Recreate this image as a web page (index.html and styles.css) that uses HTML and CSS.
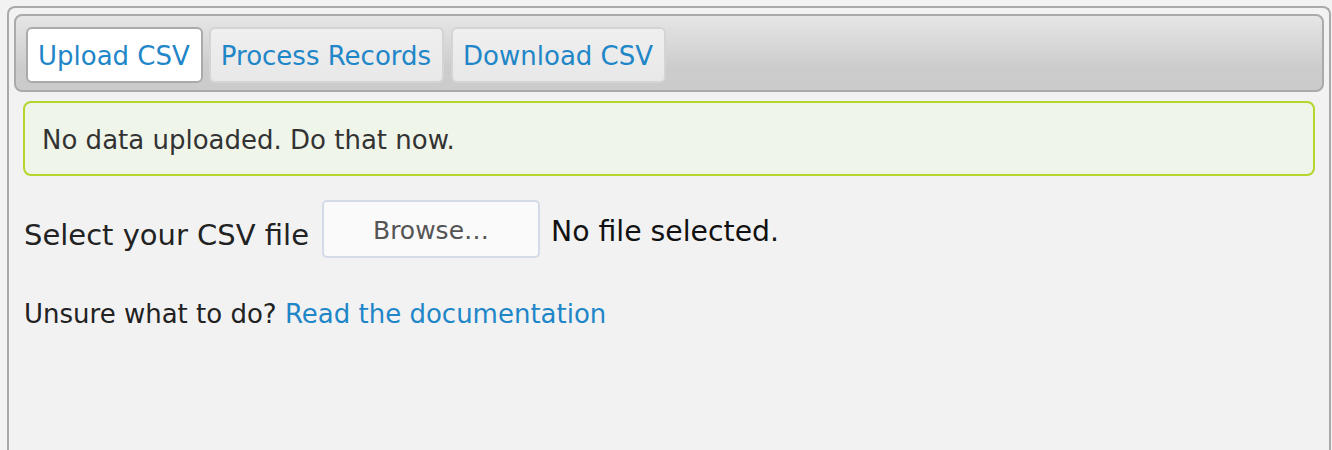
FILE: index.html
```html
<!DOCTYPE html>
<html>
<head>
<meta charset="utf-8">
<link rel="stylesheet" href="styles.css">
</head>
<body>
<div class="tabs">
  <ul class="tab-nav">
    <li class="tab active"><a href="#">Upload CSV</a></li>
    <li class="tab"><a href="#">Process Records</a></li>
    <li class="tab"><a href="#">Download CSV</a></li>
  </ul>
  <div class="panel">
    <div class="notice">No data uploaded. Do that now.</div>
    <div class="file-row">
      <span class="file-label">Select your CSV file</span>
      <span class="browse">Browse…</span>
      <span class="file-status">No file selected.</span>
    </div>
    <p class="help">Unsure what to do? <a href="#">Read the documentation</a></p>
  </div>
</div>
</body>
</html>
```
FILE: styles.css
```css
html, body {
  margin: 0;
  background: #f2f2f2;
}
body {
  padding: 6px 1px 0 7px;
  font-family: "DejaVu Sans", Verdana, sans-serif;
  color: #222;
  overflow: hidden;
}
.tabs {
  border: 2px solid #aaaaaa;
  border-bottom: none;
  border-radius: 8px 8px 0 0;
  padding: 6px 5px 0;
  height: 444px;
  box-sizing: border-box;
}
.tab-nav {
  list-style: none;
  margin: 0;
  display: flex;
  gap: 6px;
  padding: 11px 10px 7px;
  border: 2px solid #aaaaaa;
  border-radius: 8px;
  background: linear-gradient(#e6e6e6, #cccccc 70%, #cbcbcb);
}
.tab {
  height: 52px;
  border: 2px solid #d4d4d4;
  border-radius: 6px;
  background: linear-gradient(#efefef, #e8e8e8);
}
.tab + .tab + .tab {
  margin-left: 1px;
}
.tab.active {
  background: #ffffff;
  border-color: #aaaaaa;
}
.tab a {
  display: block;
  padding: 2px 11px 0 10px;
  line-height: 50px;
  font-size: 26px;
  color: #1f86c8;
  text-decoration: none;
}
.panel {
  padding: 9px 9px;
}
.notice {
  border: 2px solid #b4d62c;
  border-radius: 8px;
  background: #f0f5ea;
  color: #333;
  font-size: 26px;
  line-height: 67px;
  padding: 4px 17px 0;
}
.file-row {
  display: flex;
  align-items: center;
  margin-top: 24px;
  padding-left: 1px;
}
.file-label {
  font-size: 29px;
  margin-top: 12px;
}
.browse {
  margin-left: 13px;
  width: 218px;
  height: 58px;
  box-sizing: border-box;
  border: 2px solid #d3dbe9;
  border-radius: 5px;
  background: #fafafb;
  color: #555;
  font-size: 25px;
  display: flex;
  align-items: center;
  justify-content: center;
  padding-top: 2px;
}
.file-status {
  margin-left: 11px;
  margin-top: 4px;
  font-size: 28.3px;
  color: #111;
}
.help {
  margin: 41px 0 0 1px;
  font-size: 26px;
  line-height: 30px;
}
.help a {
  color: #1f86c8;
  text-decoration: none;
}
```
